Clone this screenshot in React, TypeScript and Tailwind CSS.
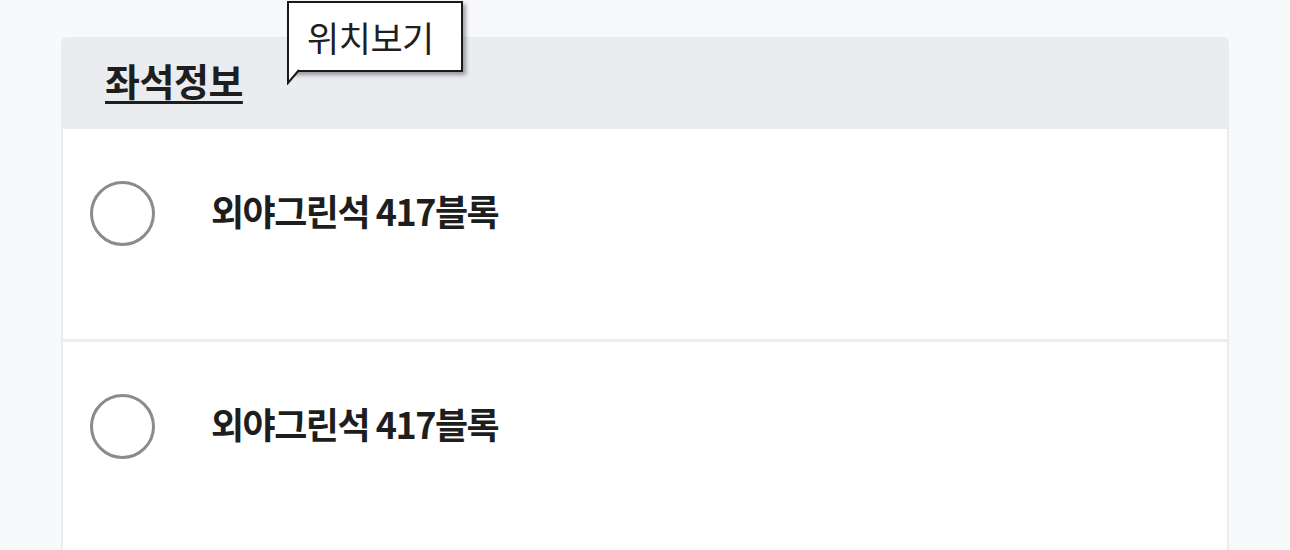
import React from 'react';

const seats = ['외야그린석 417블록', '외야그린석 417블록'];

function Tooltip() {
  return (
    <div className="absolute left-[224px] top-[-36px]">
      <div className="relative border-2 border-[#1a1a1a] bg-white pl-[18px] h-[71px] w-[176px] flex items-center shadow-[3px_3px_4px_rgba(0,0,0,0.35)]">
        <span className="text-[35px] leading-none text-[#1f1f1f] tracking-[-0.5px]">위치보기</span>
      </div>
      <svg className="absolute left-0 top-[68px]" width="14" height="16" viewBox="0 0 14 16">
        <path d="M1 0 L1 14 L12 1" fill="white" stroke="#1a1a1a" strokeWidth="2" />
      </svg>
    </div>
  );
}

function SeatRow({ label }: { label: string }) {
  return (
    <div className="bg-white h-[210px] flex items-start pt-[52px] pl-[27px]">
      <div className="w-[65px] h-[65px] rounded-full border-[3px] border-[#888c91] shrink-0" />
      <div className="ml-[56px] mt-[11px] text-[36px] font-bold leading-none text-[#1e1e1e] tracking-[-1.5px]">
        {label}
      </div>
    </div>
  );
}

export default function App() {
  return (
    <div
      className="min-h-[550px] bg-[#f8f9fb] pt-[37px] px-[61px] overflow-hidden"
      style={{ fontFamily: '"Noto Sans CJK KR", "Noto Sans", sans-serif' }}
    >
      <div className="bg-[#ebecf0] rounded-t-[6px] px-[2px] flex flex-col">
        <div className="relative h-[92px] pl-[42px] pt-[24px]">
          <h2 className="text-[38px] font-bold leading-none text-[#1e1e1e] underline decoration-[3px] underline-offset-[5px] tracking-[-0.5px]">
            좌석정보
          </h2>
          <Tooltip />
        </div>
        <div className="flex flex-col gap-[3px]">
          {seats.map((s, i) => (
            <SeatRow key={i} label={s} />
          ))}
        </div>
      </div>
    </div>
  );
}
